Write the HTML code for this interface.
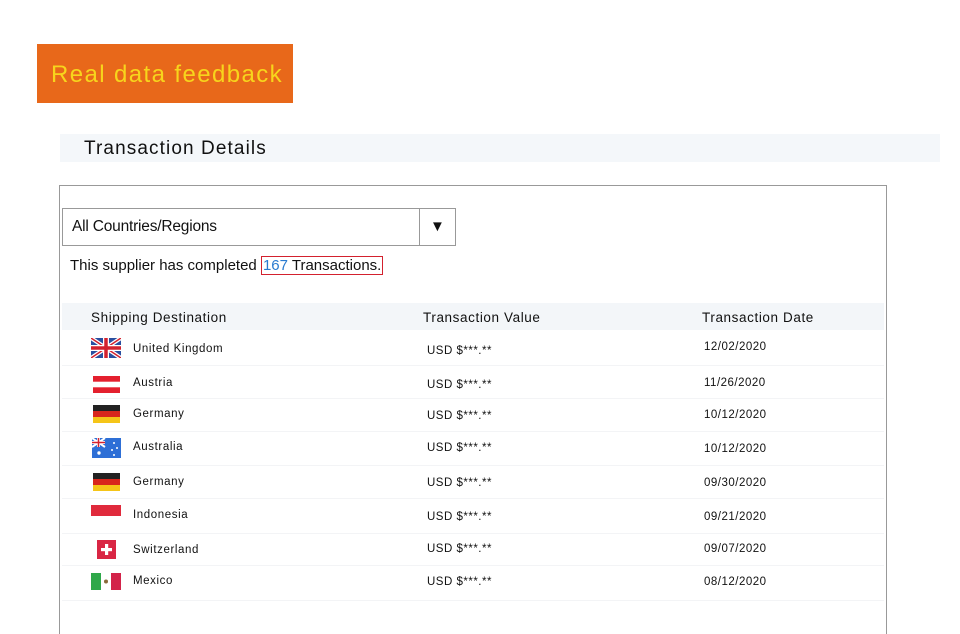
<!DOCTYPE html>
<html style="width:960px;height:634px;overflow:hidden"><head><meta charset="utf-8"><style>
body{margin:0;width:960px;height:634px;background:#fff;position:relative;overflow:hidden;font-family:"Liberation Sans",Arial,sans-serif;color:#111}
.a{position:absolute;white-space:nowrap}
.n{font-size:11.5px;letter-spacing:.6px;line-height:14px}
.v{font-size:11.5px;letter-spacing:.5px;line-height:14px}
.sep{position:absolute;left:62px;width:822px;height:1px;background:#f3f4f6}
svg{position:absolute}
</style></head><body>
<div class="a" style="left:37px;top:44px;width:256px;height:59px;background:#e8681a"></div>
<div class="a" style="left:51px;top:60px;font-size:24px;color:#f7d51c;letter-spacing:1.4px;line-height:30px">Real data feedback</div>
<div class="a" style="left:60px;top:134px;width:880px;height:28px;background:#f4f7fa"></div>
<div class="a" style="left:84px;top:137px;font-size:19px;letter-spacing:1.1px;line-height:24px">Transaction Details</div>
<div class="a" style="left:59px;top:185px;width:826px;height:460px;border:1px solid #999"></div>
<div class="a" style="left:62px;top:208px;width:392px;height:36px;border:1px solid #999"></div>
<div class="a" style="left:419px;top:209px;width:1px;height:36px;background:#999"></div>
<div class="a" style="left:72px;top:217px;font-size:15.5px;line-height:20px;letter-spacing:-.2px">All Countries/Regions</div>
<div class="a" style="left:430px;top:217px;font-size:15px;line-height:20px">▼</div>
<div class="a" style="left:70px;top:256px;font-size:15px;line-height:19px">This supplier has completed <span style="border:1px solid #d3212e;padding:0 1px"><span style="color:#2a7bd0">167</span> Transactions.</span></div>
<div class="a" style="left:62px;top:303px;width:822px;height:27px;background:#f3f6f9"></div>
<div class="a" style="left:91px;top:310px;font-size:13.5px;letter-spacing:.6px;line-height:16px">Shipping Destination</div>
<div class="a" style="left:423px;top:310px;font-size:13.5px;letter-spacing:.6px;line-height:16px">Transaction Value</div>
<div class="a" style="left:702px;top:310px;font-size:13.5px;letter-spacing:.6px;line-height:16px">Transaction Date</div>

<div class="sep" style="top:365px"></div><div class="sep" style="top:398px"></div><div class="sep" style="top:431px"></div><div class="sep" style="top:465px"></div><div class="sep" style="top:498px"></div><div class="sep" style="top:533px"></div><div class="sep" style="top:565px"></div><div class="sep" style="top:600px"></div>

<svg style="left:91px;top:338px" width="30" height="20" viewBox="0 0 30 20"><rect width="30" height="20" fill="#2a4fa0"/><path d="M0 0L30 20M30 0L0 20" stroke="#fff" stroke-width="4"/><path d="M0 0L30 20M30 0L0 20" stroke="#d3212e" stroke-width="1.5"/><path d="M15 0V20M0 10H30" stroke="#fff" stroke-width="6"/><path d="M15 0V20M0 10H30" stroke="#d3212e" stroke-width="3.5"/></svg>
<div class="a n" style="left:133px;top:342px">United Kingdom</div>
<div class="a v" style="left:427px;top:344px">USD $***.**</div>
<div class="a v" style="left:704px;top:340px">12/02/2020</div>
<svg style="left:93px;top:376px" width="27" height="17"><rect width="27" height="5.7" fill="#e4202e"/><rect y="11.3" width="27" height="5.7" fill="#e4202e"/></svg>
<div class="a n" style="left:133px;top:376px">Austria</div>
<div class="a v" style="left:427px;top:378px">USD $***.**</div>
<div class="a v" style="left:704px;top:376px">11/26/2020</div>
<svg style="left:93px;top:405px" width="27" height="18"><rect width="27" height="6" fill="#222"/><rect y="6" width="27" height="6" fill="#d8261c"/><rect y="12" width="27" height="6" fill="#f5c518"/></svg>
<div class="a n" style="left:133px;top:407px">Germany</div>
<div class="a v" style="left:427px;top:409px">USD $***.**</div>
<div class="a v" style="left:704px;top:408px">10/12/2020</div>
<svg style="left:92px;top:438px" width="29" height="20"><rect width="29" height="20" fill="#2e6fd6"/><path d="M0 0L13 9M13 0L0 9" stroke="#fff" stroke-width="2"/><path d="M6.5 0V9M0 4.5H13" stroke="#fff" stroke-width="3"/><path d="M6.5 0V9M0 4.5H13" stroke="#d3212e" stroke-width="1.5"/><circle cx="7" cy="15" r="1.7" fill="#fff"/><circle cx="22" cy="5" r="1" fill="#fff"/><circle cx="25" cy="10" r="1" fill="#fff"/><circle cx="20" cy="12" r="1" fill="#fff"/><circle cx="22" cy="17" r="1" fill="#fff"/></svg>
<div class="a n" style="left:133px;top:440px">Australia</div>
<div class="a v" style="left:427px;top:441px">USD $***.**</div>
<div class="a v" style="left:704px;top:442px">10/12/2020</div>
<svg style="left:93px;top:473px" width="27" height="18"><rect width="27" height="6" fill="#222"/><rect y="6" width="27" height="6" fill="#d8261c"/><rect y="12" width="27" height="6" fill="#f5c518"/></svg>
<div class="a n" style="left:133px;top:475px">Germany</div>
<div class="a v" style="left:427px;top:476px">USD $***.**</div>
<div class="a v" style="left:704px;top:476px">09/30/2020</div>
<svg style="left:91px;top:505px" width="30" height="11"><rect width="30" height="11" fill="#e02a3c"/></svg>
<div class="a n" style="left:133px;top:508px">Indonesia</div>
<div class="a v" style="left:427px;top:510px">USD $***.**</div>
<div class="a v" style="left:704px;top:510px">09/21/2020</div>
<svg style="left:97px;top:540px" width="19" height="19"><rect width="19" height="19" fill="#d92644"/><rect x="8" y="4" width="3.2" height="11" fill="#fff"/><rect x="4" y="8" width="11" height="3.2" fill="#fff"/></svg>
<div class="a n" style="left:133px;top:543px">Switzerland</div>
<div class="a v" style="left:427px;top:542px">USD $***.**</div>
<div class="a v" style="left:704px;top:542px">09/07/2020</div>
<svg style="left:91px;top:573px" width="30" height="17"><rect width="10" height="17" fill="#2fa84a"/><rect x="10" width="10" height="17" fill="#fff"/><rect x="20" width="10" height="17" fill="#d3234a"/><circle cx="15" cy="8.5" r="2" fill="#8a6a3a"/></svg>
<div class="a n" style="left:133px;top:574px">Mexico</div>
<div class="a v" style="left:427px;top:575px">USD $***.**</div>
<div class="a v" style="left:704px;top:575px">08/12/2020</div>
</body></html>
